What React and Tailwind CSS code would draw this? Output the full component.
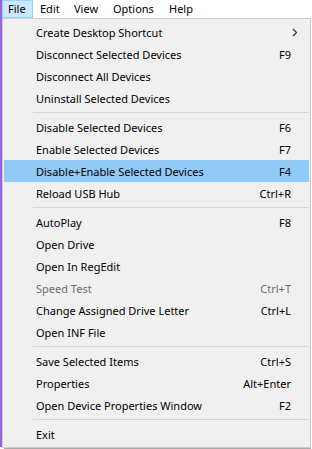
import React from "react";

const groups = [
  [
    { label: "Create Desktop Shortcut", sub: true },
    { label: "Disconnect Selected Devices", key: "F9" },
    { label: "Disconnect All Devices" },
    { label: "Uninstall Selected Devices" },
  ],
  [
    { label: "Disable Selected Devices", key: "F6" },
    { label: "Enable Selected Devices", key: "F7" },
    { label: "Disable+Enable Selected Devices", key: "F4", active: true },
    { label: "Reload USB Hub", key: "Ctrl+R" },
  ],
  [
    { label: "AutoPlay", key: "F8" },
    { label: "Open Drive" },
    { label: "Open In RegEdit" },
    { label: "Speed Test", key: "Ctrl+T", disabled: true },
    { label: "Change Assigned Drive Letter", key: "Ctrl+L" },
    { label: "Open INF File" },
  ],
  [
    { label: "Save Selected Items", key: "Ctrl+S" },
    { label: "Properties", key: "Alt+Enter" },
    { label: "Open Device Properties Window", key: "F2" },
  ],
  [{ label: "Exit" }],
];

function Item({ it }) {
  return (
    <div
      className={
        "flex h-[22px] items-center pl-[32px] pr-[18px] " +
        (it.active ? "bg-[#91c9f7]" : "") +
        (it.disabled ? " text-[#6d6d6d]" : " text-black")
      }
    >
      <span className="flex-1 whitespace-nowrap">{it.label}</span>
      {it.key && <span className="whitespace-nowrap">{it.key}</span>}
      {it.sub && (
        <svg width="6" height="9" viewBox="0 0 6 9" className="mr-[-7px]">
          <path d="M1 1 L4.5 4.5 L1 8" fill="none" stroke="#333" strokeWidth="1.2" />
        </svg>
      )}
    </div>
  );
}

export default function App() {
  return (
    <div
      className="relative h-[449px] w-[312px] overflow-hidden bg-white text-[11px] leading-none"
      style={{ fontFamily: '"Noto Sans", "Segoe UI", sans-serif' }}
    >
      <div className="flex h-[18px] items-stretch pl-[2px] text-black">
        <div className="flex w-[31px] items-center border border-[#99d1ff] bg-[#cce8ff] pb-[1px] pl-[5px]">File</div>
        <div className="flex w-[34px] items-center pb-[1px] pl-[7px]">Edit</div>
        <div className="flex w-[39px] items-center pb-[1px] pl-[7px]">View</div>
        <div className="flex w-[56px] items-center pb-[1px] pl-[7px]">Options</div>
        <div className="flex w-[40px] items-center pb-[1px] pl-[7px]">Help</div>
      </div>
      <div className="absolute left-0 top-0 h-[447px] w-[2px] bg-[#9466d8]" />
      <div className="ml-[2px] w-[309px] border border-[#cccccc] bg-[#f0f0f0] py-[2px] pl-[1px] pr-[1px]">
        {groups.map((g, gi) => (
          <div key={gi}>
            {gi > 0 && (
              <div className="flex h-[7px] items-center pl-[29px]">
                <div className="h-px w-full bg-[#d7d7d7]" />
              </div>
            )}
            {g.map((it, i) => (
              <Item key={i} it={it} />
            ))}
          </div>
        ))}
      </div>
      <div className="ml-[4px] h-[2px] w-[307px] bg-[#a9a9a9]" />
    </div>
  );
}
